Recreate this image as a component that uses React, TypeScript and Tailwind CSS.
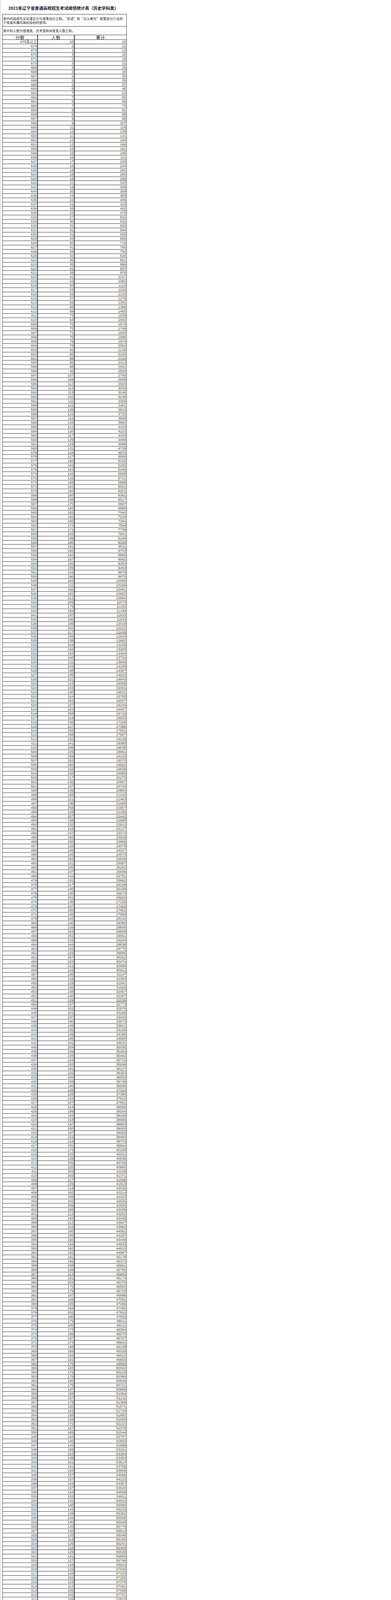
import React from "react";

// rows whose score had nobody in it (not printed in the sheet)
const MISSING = new Set([176, 171, 155, 154, 153]);

// rows read straight off the sheet: score -> count
const KNOWN: Record<number, number> = {
  675: 10, 674: 2, 673: 1, 672: 3, 671: 2, 670: 3, 669: 5, 668: 2, 667: 2,
  666: 5, 665: 2, 664: 9, 663: 7, 662: 7,
  629: 44, 628: 50, 627: 41, 626: 34,
  575: 153, 574: 142, 573: 133, 572: 168, 571: 162,
  520: 227, 519: 223, 518: 258, 517: 218, 516: 236,
  465: 233, 464: 244, 463: 232, 462: 225, 461: 257,
  419: 224, 418: 219, 417: 231, 416: 174, 415: 203, 414: 228, 413: 206,
  412: 220, 411: 203, 410: 203, 409: 217,
  365: 183, 364: 176, 363: 178, 362: 150, 361: 175,
  301: 93, 300: 106, 299: 81, 298: 101, 297: 96,
  237: 34, 236: 26, 235: 29, 234: 32, 233: 28,
  191: 3, 190: 7, 189: 8, 188: 4,
  166: 2, 165: 2, 164: 3, 163: 4, 162: 1, 161: 1, 160: 1, 159: 3, 158: 2,
  157: 2, 156: 4, 152: 1, 151: 3, 150: 1,
};

// running totals at the last row of each gap between known rows
const CUM_AT: Record<number, number> = {
  630: 625, 576: 5293, 521: 16007, 466: 29061, 420: 39260,
  366: 49859, 302: 58718, 238: 62914, 192: 63769, 167: 63873,
};

type Row = { score: number; count: number; total: number };

function buildRows(): Row[] {
  const scores: number[] = [];
  for (let s = 675; s >= 150; s--) if (!MISSING.has(s)) scores.push(s);
  const counts: number[] = new Array(scores.length).fill(0);
  let cum = 0;
  let i = 0;
  while (i < scores.length) {
    const s = scores[i];
    if (s in KNOWN) {
      counts[i] = KNOWN[s];
      cum += counts[i];
      i++;
      continue;
    }
    // fill a gap so that it lands on the next known running total
    let j = i;
    while (j < scores.length && !(scores[j] in KNOWN)) j++;
    const total = CUM_AT[scores[j - 1]] - cum;
    const hi = counts[i - 1];
    const lo = KNOWN[scores[j]];
    const n = j - i;
    const w: number[] = [];
    for (let k = 0; k < n; k++) {
      const t = (k + 1) / (n + 1);
      const x = Math.sin(scores[i + k] * 12.9898) * 43758.5453;
      const f = x - Math.floor(x);
      w.push((hi + (lo - hi) * t) * (0.88 + 0.24 * f));
    }
    const sumW = w.reduce((a, b) => a + b, 0);
    const raw = w.map((v) => (v * total) / sumW);
    const base = raw.map((v) => Math.floor(v));
    let rest = total - base.reduce((a, b) => a + b, 0);
    const order = raw
      .map((v, k) => [v - Math.floor(v), k] as [number, number])
      .sort((a, b) => b[0] - a[0]);
    for (let k = 0; rest > 0; k = (k + 1) % n, rest--) base[order[k][1]]++;
    for (let k = 0; k < n; k++) {
      counts[i + k] = base[k];
      cum += base[k];
    }
    i = j;
  }
  let run = 0;
  return scores.map((score, k) => {
    run += counts[k];
    return { score, count: counts[k], total: run };
  });
}

const ROWS = buildRows();

const cjk = "font-['Noto_Sans_CJK_SC','Liberation_Sans',sans-serif]";
const num = "font-['Liberation_Sans','Noto_Sans_CJK_SC',sans-serif]";

export default function App() {
  return (
    <div className="w-[1000px] bg-white">
      <div className="ml-px min-h-[5810px] border-l border-dotted border-[#9a9a9a] pl-[4px]">
        <div className="w-[318px]">
          {/* Title */}
          <div
            className={`flex h-[36px] items-center justify-center pt-[7px] pr-[6px] text-[10.7px] font-bold text-[#111] ${cjk}`}
          >
            2021年辽宁省普通高校招生考试成绩统计表（历史学科类）
          </div>

          <div className="border-l border-r border-t border-[#3a3a3a]">
            {/* Notes */}
            <div
              className={`flex h-[31px] flex-col justify-center border-b border-[#3a3a3a] pl-[1px] text-[8.4px] leading-[10px] text-[#222] ${cjk}`}
            >
              <span className="whitespace-nowrap">
                表中的成绩为文化课总分与政策加分之和。“双语”和“见义勇为”政策加分只适用
              </span>
              <span className="whitespace-nowrap">于我省所属的高校投档时使用。</span>
            </div>
            <div
              className={`flex h-[22px] items-center border-b border-[#3a3a3a] pl-[1px] text-[8.4px] text-[#222] ${cjk}`}
            >
              表中的人数为普通类、艺术类和体育类人数之和。
            </div>

            {/* Header */}
            <div
              className={`grid h-[12px] grid-cols-[90px_94px_132px] border-b border-[#3a3a3a] text-[11.5px] leading-[12px] text-[#222] ${cjk}`}
            >
              <div className="border-r-2 border-[#3a3a3a] text-center">分数</div>
              <div className="border-r-2 border-[#3a3a3a] text-center">人数</div>
              <div className="text-center">累计</div>
            </div>

            {/* Data rows */}
            {ROWS.map((r, k) => (
              <div
                key={r.score}
                className={`grid h-[10.96px] grid-cols-[90px_94px_132px] border-b border-[#333] text-[9px] leading-[10px] text-[#3c3c3c] ${num}`}
              >
                <div className="border-r-2 border-[#3a3a3a] pr-px text-right">
                  {k === 0 ? (
                    <>
                      675<span className={cjk}>及以上</span>
                    </>
                  ) : (
                    r.score
                  )}
                </div>
                <div className="border-r-2 border-[#3a3a3a] pr-px text-right">{r.count}</div>
                <div className="pr-px text-right">{r.total}</div>
              </div>
            ))}
          </div>
        </div>
      </div>
    </div>
  );
}
